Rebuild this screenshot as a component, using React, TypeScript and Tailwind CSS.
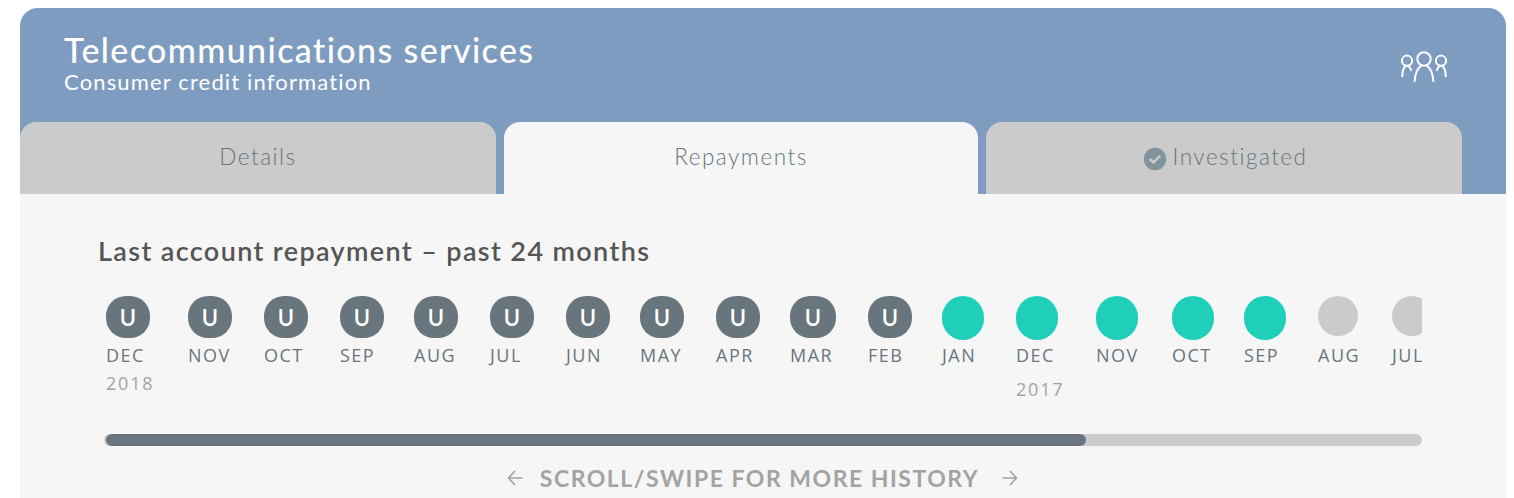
import React from 'react';
import clsx from 'clsx';

type Status = 'unknown' | 'paid' | 'none';

interface Month {
    label: string;
    status: Status;
    column: string;
    badge?: string;
    year?: string;
}

const months: Month[] = [
    { label: 'DEC', status: 'unknown', column: 'w-[82px]', year: '2018' },
    { label: 'NOV', status: 'unknown', column: 'w-[76px]' },
    { label: 'OCT', status: 'unknown', column: 'w-[76px]' },
    { label: 'SEP', status: 'unknown', column: 'w-[74px]' },
    { label: 'AUG', status: 'unknown', column: 'w-[76px]' },
    { label: 'JUL', status: 'unknown', column: 'w-[76px]' },
    { label: 'JUN', status: 'unknown', column: 'w-[74px]' },
    { label: 'MAY', status: 'unknown', column: 'w-[76px]' },
    { label: 'APR', status: 'unknown', column: 'w-[74px]' },
    { label: 'MAR', status: 'unknown', column: 'w-[78px]', badge: 'w-[46px]' },
    { label: 'FEB', status: 'unknown', column: 'w-[74px]' },
    { label: 'JAN', status: 'paid', column: 'w-[74px]' },
    { label: 'DEC', status: 'paid', column: 'w-[80px]', year: '2017' },
    { label: 'NOV', status: 'paid', column: 'w-[76px]' },
    { label: 'OCT', status: 'paid', column: 'w-[72px]' },
    { label: 'SEP', status: 'paid', column: 'w-[74px]' },
    { label: 'AUG', status: 'none', column: 'w-[74px]' },
    { label: 'JUL', status: 'none', column: 'w-[74px]' },
];

function PeopleIcon() {
    return (
        <svg width="48" height="32" viewBox="0 0 48 32" fill="none" stroke="white" strokeWidth="2" strokeLinecap="round">
            <circle cx="24" cy="8" r="6.7" />
            <path d="M14.700 30c.2-7.500 2.800-12.500 6.800-15.800M33.300 30c-.2-7.500-2.800-12.500-6.800-15.800" />
            <circle cx="7" cy="9.700" r="5.100" />
            <path d="M2.300 25.200c0-5 1.200-8.500 3.400-10.500M8.300 14.700c1.200 1 2.200 2.500 2.800 4.400" />
            <circle cx="41" cy="9.700" r="5.100" />
            <path d="M45.700 25.200c0-5-1.200-8.500-3.400-10.500M39.700 14.700c-1.200 1-2.200 2.500-2.800 4.400" />
        </svg>
    );
}

function CheckIcon() {
    return (
        <svg width="24" height="24" viewBox="0 0 24 24" fill="none">
            <circle cx="12" cy="12" r="11.200" fill="#81939c" />
            <path d="m6.800 12 3.600 3.500 6.700-6.700" stroke="#cbcbcb" strokeWidth="2.600" />
        </svg>
    );
}

function Arrow({ className }: { className?: string }) {
    return (
        <svg
            width="16"
            height="16"
            viewBox="0 0 16 16"
            fill="none"
            stroke="#a3a3a3"
            strokeWidth="1.700"
            className={className}
        >
            <path d="M15.500 8H1.500M8 1 1.500 8 8 15" />
        </svg>
    );
}

function MonthItem({ month }: { month: Month }) {
    return (
        <div className={clsx('shrink-0', month.column)}>
            <div className="h-[45px]">
                <div
                    className={clsx(
                        'flex items-center justify-center text-[22px] font-semibold text-white',
                        month.status === 'unknown' && 'h-[42px] rounded-[20px] bg-[#69757c]',
                        month.status === 'unknown' && (month.badge ?? 'w-11'),
                        month.status === 'paid' && 'h-11 w-[42px] rounded-full bg-[#20cfb9]',
                        month.status === 'none' && 'h-10 w-10 rounded-full bg-[#cbcbcb]'
                    )}
                >
                    {month.status === 'unknown' && 'U'}
                </div>
            </div>
            <div className="h-7 font-['Open_Sans',sans-serif] text-[18px] leading-7 tracking-[1.500px] whitespace-nowrap text-[#69757c]">
                {month.label}
            </div>
            {month.year && (
                <div
                    className={clsx(
                        "font-['Open_Sans',sans-serif] text-[18px] leading-7 tracking-[1.800px] text-[#a3a3a3]",
                        month.status === 'paid' && 'pt-1.5'
                    )}
                >
                    {month.year}
                </div>
            )}
        </div>
    );
}

export default function App() {
    return (
        <div className="h-[498px] overflow-hidden bg-white pt-2 pr-2 pl-5 font-['Lato',sans-serif]">
            {/* Account header */}
            <header className="flex h-[186px] flex-col justify-between rounded-t-[18px] bg-[#7e9cbf]">
                <div className="flex items-start justify-between pt-[23px] pr-[58px] pl-11 text-white">
                    <div>
                        <h1 className="text-[34px] leading-[38px] font-medium tracking-[1.380px]">
                            Telecommunications services
                        </h1>
                        <p className="text-[22px] leading-[26px] tracking-[1.150px]">Consumer credit information</p>
                    </div>
                    <div className="pt-5">
                        <PeopleIcon />
                    </div>
                </div>

                <nav className="flex h-[72px] gap-2 pr-11 text-[22.500px] font-light tracking-[1.500px] text-[#69757c]">
                    <button className="w-[476px] rounded-t-2xl bg-[#cbcbcb] pb-[3px]">Details</button>
                    <button className="w-[474px] rounded-t-2xl bg-[#f6f6f6] pb-[3px]">Repayments</button>
                    <button className="flex w-[476px] items-center justify-center gap-1.5 rounded-t-2xl bg-[#cbcbcb] pb-[3px] pl-0.5">
                        <span className="pt-1">
                            <CheckIcon />
                        </span>
                        Investigated
                    </button>
                </nav>
            </header>

            {/* Repayment history */}
            <main className="h-[304px] bg-[#f6f6f6] pt-10 pr-[84px] pl-[78px]">
                <h2 className="h-[62px] text-[27px] leading-[34px] font-semibold tracking-[1.370px] text-[#555555]">
                    Last account repayment – past 24 months
                </h2>
                <div className="ml-2 flex h-[138px] overflow-hidden">
                    {months.map((month, i) => (
                        <MonthItem key={i} month={month} />
                    ))}
                </div>
                <div className="ml-1.5 h-3 rounded-full bg-[#cbcbcb] pl-0.5">
                    <div className="h-full w-[980px] rounded-full bg-[#69757c]" />
                </div>
                <div className="flex items-center justify-center pt-4 pl-[5px] text-[23px] leading-8 font-bold tracking-[1.500px] text-[#a3a3a3]">
                    <Arrow className="mr-[17px]" />
                    SCROLL/SWIPE FOR MORE HISTORY
                    <Arrow className="ml-[23px] rotate-180" />
                </div>
            </main>
        </div>
    );
}
